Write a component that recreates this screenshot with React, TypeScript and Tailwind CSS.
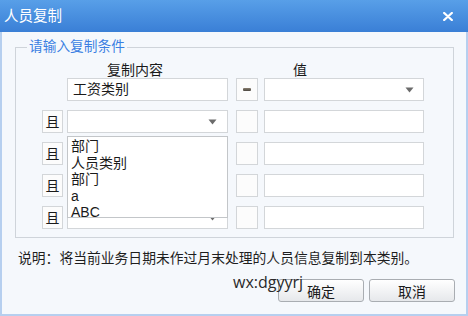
import React from "react";

function Arrow() {
  return (
    <svg width="9" height="6" viewBox="0 0 9 6" className="block">
      <path d="M0.5 0.5H8.5L4.5 5.5Z" fill="#6b6b6b" />
    </svg>
  );
}

function Select({ children }: { children?: React.ReactNode }) {
  return (
    <div className="flex h-[23px] w-[161px] items-center justify-between border border-[#d3d6d9] bg-white pl-[5px] pr-[10px]">
      <span className="text-[14px] leading-[18px]">{children}</span>
      <Arrow />
    </div>
  );
}

function QieBox() {
  return (
    <div className="flex h-[23px] w-[21px] items-center justify-center border border-[#d3d6d9] bg-[#fcfcfc] text-[14px] leading-none">
      且
    </div>
  );
}

function OpBox({ eq }: { eq?: boolean }) {
  return (
    <div className="ml-[8px] flex h-[23px] w-[22px] items-center justify-center border border-[#d3d6d9] bg-[#fcfcfc]">
      {eq && <div className="h-[3px] w-[8px] rounded-[1px] bg-gradient-to-b from-[#8a7f70] to-[#4a4640]" />}
    </div>
  );
}

function ValueBox({ arrow }: { arrow?: boolean }) {
  return (
    <div className="ml-[6px] flex h-[23px] w-[160px] items-center justify-end border border-[#d3d6d9] bg-white pr-[9px]">
      {arrow && <Arrow />}
    </div>
  );
}

export default function App() {
  const items = ["部门", "人员类别", "部门", "a", "ABC"];
  return (
    <div className="relative h-[316px] w-[468px] overflow-hidden bg-white font-['Liberation_Sans','Noto_Sans_CJK_SC',sans-serif] text-[#1a1a1a]">
      <div className="flex h-[32px] items-center justify-between bg-gradient-to-b from-[#589fe8] to-[#3a7fd6] pl-[4px] pr-[15px]">
        <span className="text-[14.5px] leading-none text-white">人员复制</span>
        <svg width="10" height="9" viewBox="0 0 10 9" className="block">
          <path d="M1.2 1L8.8 8M8.8 1L1.2 8" stroke="white" strokeWidth="2.3" strokeLinecap="round" />
        </svg>
      </div>
      <div className="flex h-[284px] flex-col border-x-2 border-b-2 border-[#b6cfef] bg-[#f5f8fc] pt-[6px]">
        <fieldset className="ml-[13px] mr-[12px] border border-[#cfd4da] p-0">
          <legend className="ml-[11px] px-[2px] text-[13.7px] leading-[18px] text-[#3b7fe2]">请输入复制条件</legend>
          <div className="pb-[8px] pl-[26px] pt-[6px]">
            <div className="flex h-[16px] items-center text-[14px] leading-none">
              <span className="ml-[65px] w-[56px] text-center">复制内容</span>
              <span className="ml-[130px] w-[14px] text-center">值</span>
            </div>
            <div className="flex flex-col gap-[9px]">
              <div className="flex items-center">
                <div className="w-[21px]" />
                <div className="ml-[4px] flex h-[23px] w-[161px] items-center border border-[#d3d6d9] bg-white pl-[5px] text-[14px]">
                  工资类别
                </div>
                <OpBox eq />
                <ValueBox arrow />
              </div>
              <div className="flex items-center">
                <QieBox />
                <div className="relative ml-[4px]">
                  <Select />
                  <div className="absolute left-0 top-[26px] z-10 h-[82px] w-[161px] border border-[#c3c6c9] bg-white pl-[3px] pt-[1px]">
                    {items.map((t, i) => (
                      <div key={i} className="text-[14px] leading-[16.5px]">
                        {t}
                      </div>
                    ))}
                  </div>
                </div>
                <OpBox />
                <ValueBox />
              </div>
              {[0, 1, 2].map((i) => (
                <div key={i} className="flex items-center">
                  <QieBox />
                  <div className="ml-[4px]">
                    <Select />
                  </div>
                  <OpBox />
                  <ValueBox />
                </div>
              ))}
            </div>
          </div>
        </fieldset>
        <div className="mt-[11px] pl-[16px] text-[13.8px] leading-[20px] text-[#1e1e1e]">
          说明：将当前业务日期未作过月末处理的人员信息复制到本类别。
        </div>
        <div className="mt-[10px] flex justify-end gap-[5px] pr-[11px]">
          <button className="flex h-[23px] w-[86px] items-center justify-center rounded-[3px] border border-[#a9adb2] bg-gradient-to-b from-[#ffffff] to-[#e6e8eb] pt-[3px] text-[14px] leading-none">
            确定
          </button>
          <button className="flex h-[23px] w-[86px] items-center justify-center rounded-[3px] border border-[#a9adb2] bg-gradient-to-b from-[#ffffff] to-[#e6e8eb] pt-[3px] text-[14px] leading-none">
            取消
          </button>
        </div>
      </div>
      <div className="absolute left-[233px] top-[274px] z-20 font-['Open_Sans',sans-serif] text-[16px] leading-[16px] text-[#2a2a2a]">
        wx:dgyyrj
      </div>
    </div>
  );
}
